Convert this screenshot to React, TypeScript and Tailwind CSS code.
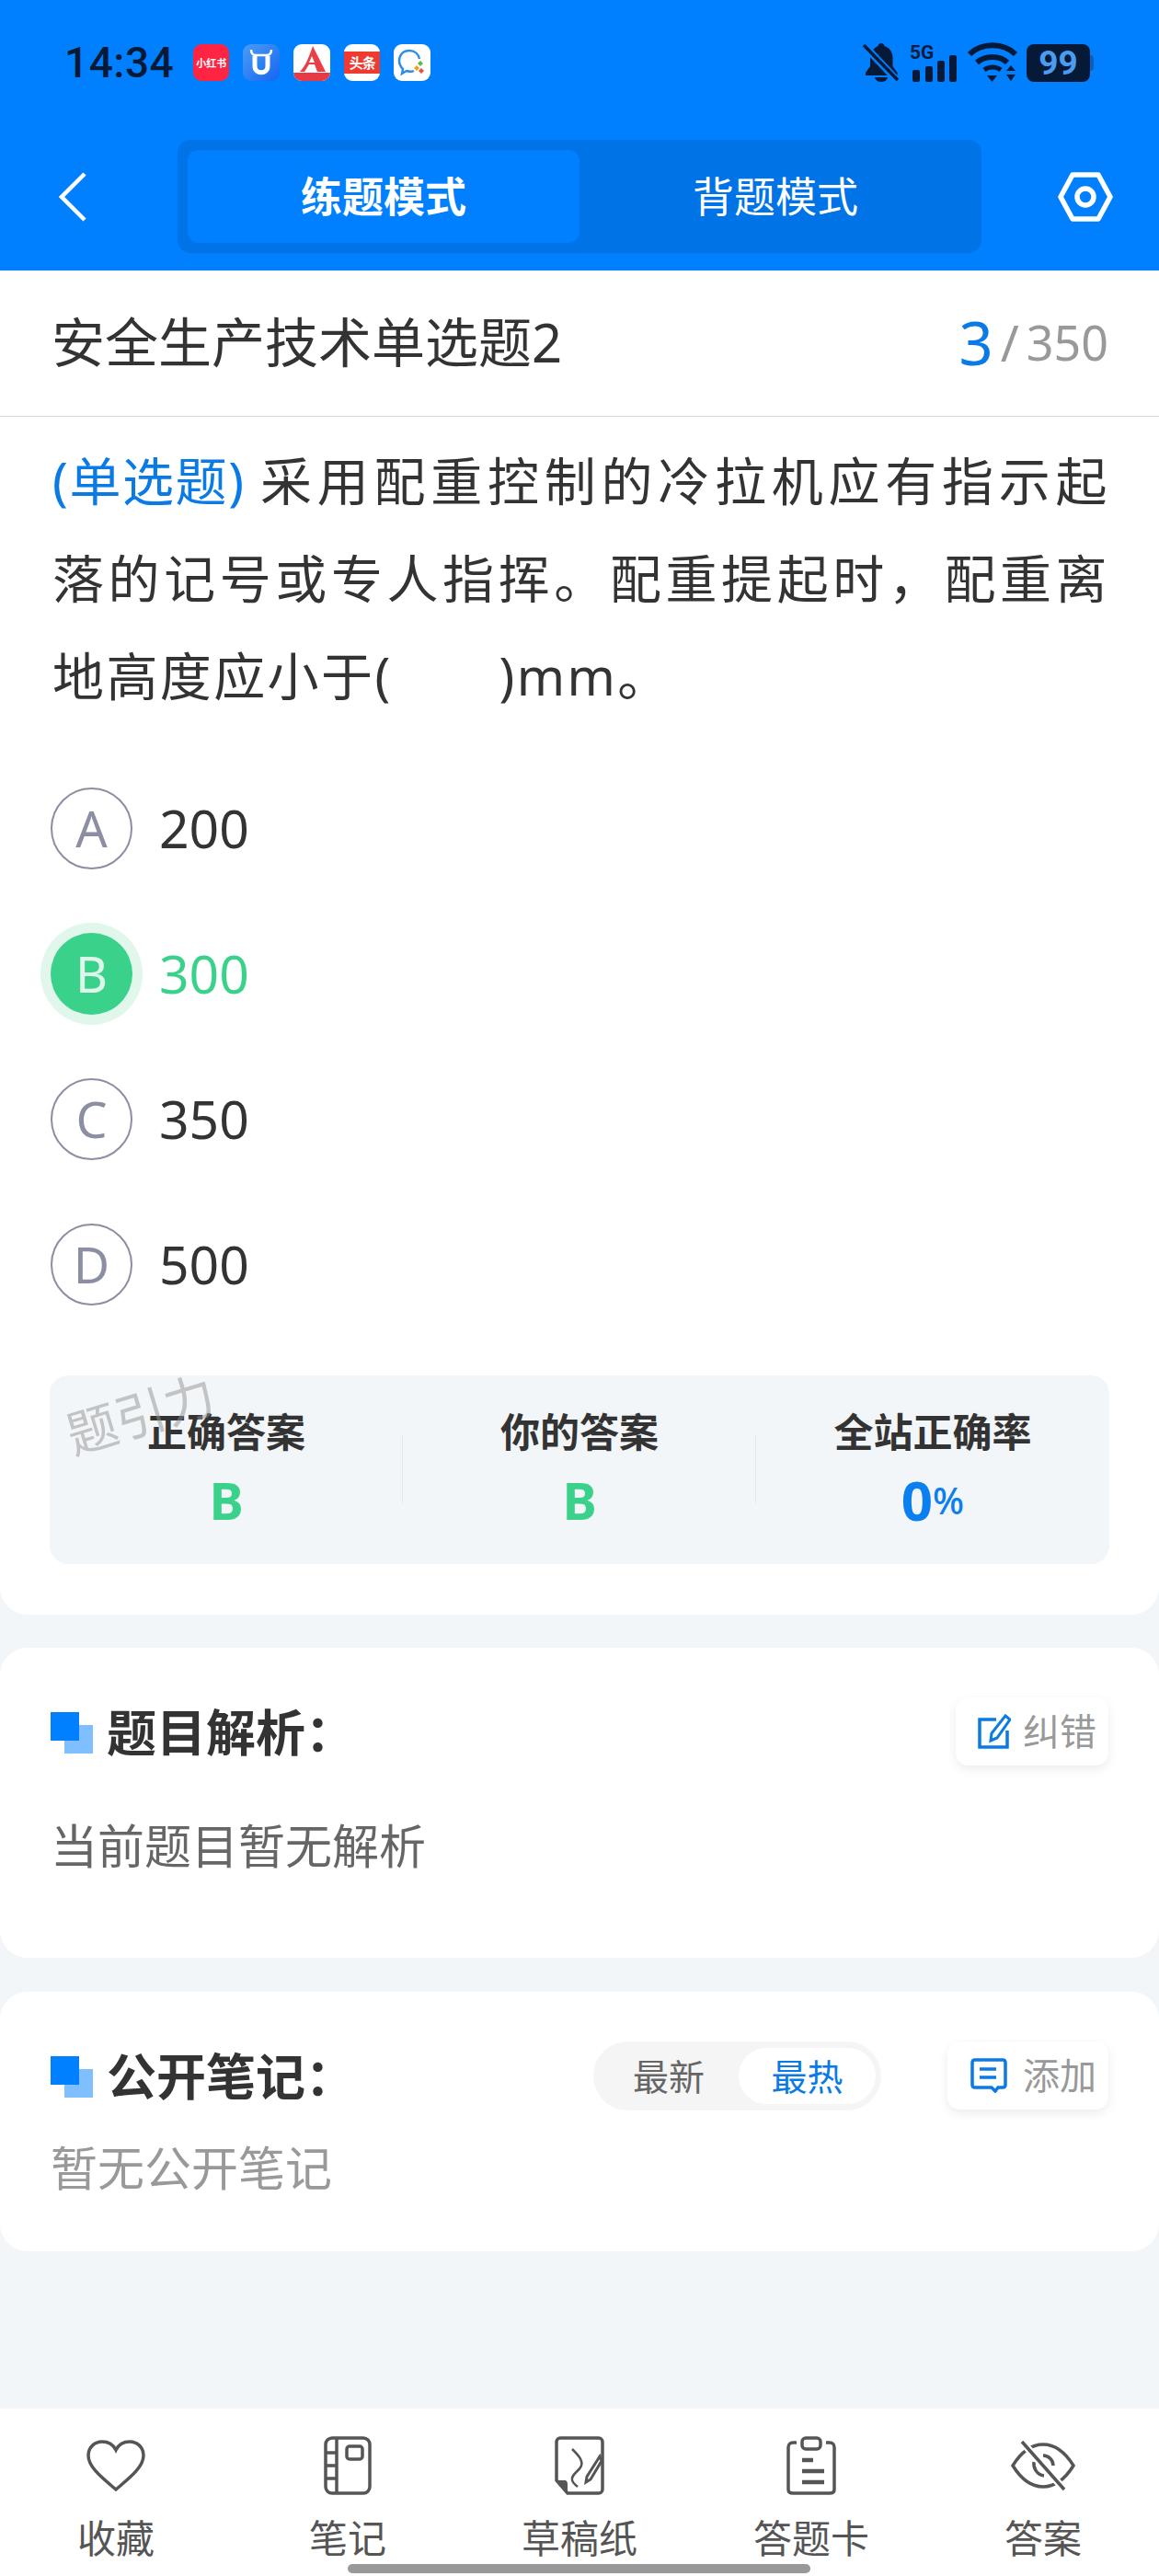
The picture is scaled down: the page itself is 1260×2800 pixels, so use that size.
import React from 'react';

const cjk = "font-['Noto_Sans','Noto_Sans_CJK_SC',sans-serif]";

function SectionMark() {
  return (
    <div className="relative w-[46px] h-[45px] shrink-0">
      <div className="absolute left-[15px] top-[14px] w-[31px] h-[31px] bg-[#80bfff]" />
      <div className="absolute left-0 top-0 w-[31px] h-[31px] bg-[#0080ff]" />
    </div>
  );
}

function StatusIcons() {
  return (
    <div className="flex items-center">
      <svg width="42" height="44" viewBox="0 0 42 44" className="mr-[10px]">
        <path d="M21 1c2 0 3 1 3.500 3 6 2 9 7 9 13v9l5 7v3H4v-3l5-7v-9C9 13 11 7 17.500 4 18 2 19 1 21 1z" fill="#061a38" />
        <path d="M14 38h14c-1 4-4 5-7 5s-6-1-7-5z" fill="#061a38" />
        <path d="M2 3l36 38" stroke="#0080ff" strokeWidth="8" />
        <path d="M2 3l37 38" stroke="#061a38" strokeWidth="3.500" />
      </svg>
      <svg width="52" height="44" viewBox="0 0 52 44" className="mr-[11px]">
        <text x="0" y="18" fontSize="21" fontWeight="700" fill="#061a38" fontFamily="Roboto, sans-serif">5G</text>
        <rect x="3" y="30" width="8" height="13" rx="2" fill="#061a38" />
        <rect x="17" y="26" width="8" height="17" rx="2" fill="#061a38" />
        <rect x="30" y="20" width="8" height="23" rx="2" fill="#061a38" />
        <rect x="43" y="14" width="8" height="29" rx="2" fill="#061a38" />
      </svg>
      <svg width="54" height="44" viewBox="0 0 54 44" className="mr-[10px]">
        <path d="M2 13C15 0 39 0 52 13" fill="none" stroke="#061a38" strokeWidth="6" />
        <path d="M10 22c9-8 25-8 33 0" fill="none" stroke="#061a38" strokeWidth="6" />
        <path d="M18 30c5-4 13-4 18 0" fill="none" stroke="#061a38" strokeWidth="5" />
        <path d="M21 36h11l-5.500 7zM42 31l5-6 5 6zM42 35h10l-5 7z" fill="#061a38" />
      </svg>
      <div className="relative w-[69px] h-[41px] rounded-[8px] bg-[#061a38] flex items-center justify-center mr-[3px]">
        <span className="font-['Roboto',sans-serif] text-[37px] font-bold leading-none text-[#4a9cf0]">99</span>
        <div className="absolute right-[-4px] top-[12px] w-[4px] h-[17px] rounded-r bg-[#0a5fc0]" />
      </div>
    </div>
  );
}

function AppIcons() {
  return (
    <div className="flex items-center gap-[15px] ml-[21px]">
      <div className="w-[39px] h-[40px] rounded-[9px] bg-[#ff2442] flex items-center justify-center">
        <span className={`${cjk} text-[11px] font-bold leading-none text-white whitespace-nowrap`}>小红书</span>
      </div>
      <div className="w-[40px] h-[40px] rounded-[9px] bg-gradient-to-br from-[#4b9bf5] to-[#1565f0] flex items-center justify-center">
        <svg width="28" height="30" viewBox="0 0 28 30">
          <path d="M3 1c0 4 2 6 5 6h12c3 0 5-2 5-6" fill="none" stroke="#fff" strokeWidth="2.500" />
          <path d="M7 8v11c0 9 14 9 14 0V8" fill="none" stroke="#fff" strokeWidth="5" />
        </svg>
      </div>
      <div className="relative w-[40px] h-[40px] rounded-[9px] bg-white overflow-hidden flex justify-center">
        <svg width="30" height="30" viewBox="0 0 30 30" className="mt-[2px]">
          <path d="M16 0L30 28H21L18 20H12L7 28H2C8 22 12 12 16 0z" fill="#ea3f47" />
          <path d="M15 11l3 7h-6z" fill="#fff" />
        </svg>
        <div className="absolute bottom-0 left-0 w-full h-[9px] bg-[#e83a44]" />
      </div>
      <div className="w-[39px] h-[40px] rounded-[9px] bg-white flex items-center overflow-hidden">
        <div className="w-full h-[24px] bg-[#ee3a2f] flex items-center justify-center">
          <span className={`${cjk} text-[15px] font-bold leading-none text-white whitespace-nowrap tracking-[-1px]`}>头条</span>
        </div>
      </div>
      <div className="w-[40px] h-[40px] rounded-[9px] bg-white flex items-center justify-center">
        <svg width="32" height="30" viewBox="0 0 32 30">
          <path d="M13 2C6 2 2 7 2 13c0 4 2 7 4 9l-1 5 5-3c3 1 6 1 8 0" fill="none" stroke="#2e8fe6" strokeWidth="2.500" />
          <path d="M13 2c6 0 10 4 11 9" fill="none" stroke="#2e8fe6" strokeWidth="2.500" />
          <path d="M25 13l3 3-3 3-3-3z" fill="#5fb84a" />
          <path d="M21 18l3 3-3 3-3-3z" fill="#f0a020" />
          <path d="M26 21l3 3-3 3-3-3z" fill="#e8503a" />
        </svg>
      </div>
    </div>
  );
}

function Option({ letter, value, picked }: { letter: string; value: string; picked?: boolean }) {
  return (
    <div className="h-[158px] flex items-center">
      {picked ? (
        <div className="w-[89px] h-[89px] rounded-full bg-[#3ad28a] ring-[11px] ring-[#e1f7ec] flex items-center justify-center text-[#dff7ea] text-[54px] leading-none">
          {letter}
        </div>
      ) : (
        <div className="w-[89px] h-[89px] rounded-full border-[2.500px] border-[#8c8ea3] flex items-center justify-center text-[#8c8ea3] text-[54px] leading-none">
          {letter}
        </div>
      )}
      <span className={`ml-[29px] text-[57px] leading-none ${picked ? 'text-[#3ad28a]' : 'text-[#333]'}`}>{value}</span>
    </div>
  );
}

function Stat({ label, children, divided }: { label: string; children: React.ReactNode; divided?: boolean }) {
  return (
    <div className="relative flex-1 flex flex-col items-center pt-[40px]">
      {divided && <div className="absolute right-0 top-[65px] w-px h-[74px] bg-[#e4e8ee]" />}
      <div className="text-[43px] leading-[44px] font-bold text-[#333]">{label}</div>
      <div className="mt-[25px] h-[52px] flex items-center justify-center">{children}</div>
    </div>
  );
}

function NavItem({ label, children }: { label: string; children: React.ReactNode }) {
  return (
    <div className="flex flex-col items-center">
      <div className="h-[68px] flex items-center justify-center">{children}</div>
      <div className="mt-[20px] text-[42px] leading-[50px] text-[#555]">{label}</div>
    </div>
  );
}

const navStroke = { fill: 'none', stroke: '#555', strokeWidth: 3.5 };

export default function App() {
  return (
    <div className={`${cjk} relative w-[1260px] h-[2800px] bg-[#f2f6f9] flex flex-col overflow-hidden`}>
      <header className="h-[294px] bg-[#0080ff] shrink-0">
        <div className="h-[136px] pl-[70px] pr-[72px] flex items-center justify-between">
          <div className="flex items-center">
            <span className="font-['Roboto',sans-serif] text-[46px] font-medium leading-none text-[#061a38] tracking-[0.5px]">14:34</span>
            <AppIcons />
          </div>
          <StatusIcons />
        </div>
        <div className="mt-[16px] pl-[64px] pr-[50px] flex items-center">
          <svg width="30" height="54" viewBox="0 0 30 54">
            <path d="M28 2L3 27l25 25" fill="none" stroke="#fff" strokeWidth="4.500" />
          </svg>
          <div className="ml-[99px] w-[874px] h-[123px] rounded-[14px] bg-[#0073e6] p-[11px] pr-0 flex">
            <div className="w-[426px] h-[101px] rounded-[12px] bg-[#0080ff] flex items-center justify-center text-[45px] font-bold text-white">练题模式</div>
            <div className="flex-1 flex items-center justify-center text-[45px] text-white pr-[11px]">背题模式</div>
          </div>
          <svg width="60" height="54" viewBox="0 0 60 54" className="ml-auto">
            <path d="M16 3h28l13 24-13 24H16L3 27z" fill="none" stroke="#fff" strokeWidth="5.500" strokeLinejoin="round" />
            <circle cx="30" cy="27" r="9" fill="none" stroke="#fff" strokeWidth="5.500" />
          </svg>
        </div>
      </header>

      <section className="h-[1461px] shrink-0 bg-white rounded-b-[30px]">
        <div className="h-[159px] border-b-[1.500px] border-[#d8d8d8] pl-[56px] pr-[55px] pb-[2px] flex items-center justify-between">
          <div className="text-[58px] text-[#333] leading-none">安全生产技术单选题2</div>
          <div className="flex items-center">
            <span className="text-[65px] leading-none text-[#0a7ae6] ml-[3px]">3</span>
            <span className="text-[54px] leading-none text-[#999] ml-[8px]">/</span>
            <span className="text-[52px] leading-none text-[#999] ml-[8px]">350</span>
          </div>
        </div>
        <div className="pl-[57px] pr-[54px] pt-[16px] text-[56px] leading-[106px] tracking-[2.400px] text-[#333]">
          <div className="whitespace-nowrap text-justify [text-align-last:justify]">
            <span className="inline-block mr-[13px] text-[#0a7ae6] tracking-[1.600px]">(单选题)</span>采用配重控制的冷拉机应有指示起
          </div>
          <div className="whitespace-nowrap text-justify [text-align-last:justify]">落的记号或专人指挥。配重提起时，配重离</div>
          <div className="whitespace-nowrap">
            地高度应小于(<span className="inline-block w-[116px]" />)mm。
          </div>
        </div>
        <div className="pl-[55px] mt-[34px]">
          <Option letter="A" value="200" />
          <Option letter="B" value="300" picked />
          <Option letter="C" value="350" />
          <Option letter="D" value="500" />
        </div>
        <div className="relative mx-[54px] mt-[42px] h-[205px] rounded-[20px] bg-[#f2f6f9] flex">
          <Stat label="正确答案" divided><span className="text-[56px] font-bold leading-none text-[#3ad28a]">B</span></Stat>
          <Stat label="你的答案" divided><span className="text-[56px] font-bold leading-none text-[#3ad28a]">B</span></Stat>
          <Stat label="全站正确率">
            <span className="text-[60px] font-bold leading-none text-[#0a7ff0]">0</span>
            <span className="text-[40px] font-medium leading-none text-[#0a7ff0] self-end mb-[5px]">%</span>
          </Stat>
          <div className="absolute left-[16px] top-[14px] text-[55px] leading-none text-[#8f8f8f]/50 -rotate-[17deg]">题引力</div>
        </div>
      </section>

      <section className="mt-[36px] h-[337px] shrink-0 bg-white rounded-[30px] pl-[55px] pr-[55px] pt-[54px]">
        <div className="flex items-start justify-between">
          <div className="flex items-center mt-[8px]">
            <SectionMark />
            <div className="ml-[15px] text-[54px] leading-[60px] font-bold text-[#333]">题目解析：</div>
          </div>
          <div className="w-[166px] h-[74px] rounded-[14px] bg-white shadow-[0_4px_12px_rgba(0,0,0,0.08)] flex items-center pl-[24px]">
            <svg width="36" height="38" viewBox="0 0 36 38">
              <path d="M20 6H2v30h30V18" fill="none" stroke="#0a7ae6" strokeWidth="3.500" />
              <path d="M30 2l5 4-14 20-7 3 1-8z" fill="none" stroke="#0a7ae6" strokeWidth="3" />
            </svg>
            <span className="ml-[13px] text-[40px] leading-none text-[#999]">纠错</span>
          </div>
        </div>
        <div className="mt-[57px] text-[51px] leading-[60px] text-[#666]">当前题目暂无解析</div>
      </section>

      <section className="mt-[37px] h-[282px] shrink-0 bg-white rounded-[30px] pl-[55px] pr-[55px] pt-[54px]">
        <div className="flex items-start">
          <div className="flex items-center mt-[8px]">
            <SectionMark />
            <div className="ml-[15px] text-[54px] leading-[60px] font-bold text-[#333]">公开笔记：</div>
          </div>
          <div className="ml-auto w-[313px] h-[75px] rounded-full bg-[#f5f5f5] flex items-center pr-[6px]">
            <div className="flex-1 text-center text-[39px] leading-none text-[#666] pl-[6px]">最新</div>
            <div className="w-[149px] h-[61px] rounded-full bg-white flex items-center justify-center text-[39px] leading-none text-[#0a7ae6]">最热</div>
          </div>
          <div className="ml-[72px] w-[175px] h-[74px] rounded-[14px] bg-white shadow-[0_4px_12px_rgba(0,0,0,0.08)] flex items-center pl-[25px]">
            <svg width="40" height="38" viewBox="0 0 40 38">
              <path d="M5 2h30c2 0 3 1 3 3v24c0 2-1 3-3 3h-5l-3 4-4-4H5c-2 0-3-1-3-3V5c0-2 1-3 3-3z" fill="none" stroke="#0a7ae6" strokeWidth="3.500" />
              <path d="M10 12h18M10 21h18" stroke="#0a7ae6" strokeWidth="3.500" />
            </svg>
            <span className="ml-[17px] text-[40px] leading-none text-[#999]">添加</span>
          </div>
        </div>
        <div className="mt-[32px] text-[51px] leading-[60px] text-[#999]">暂无公开笔记</div>
      </section>

      <div className="flex-1" />

      <nav className="h-[182px] shrink-0 bg-white pt-[28px] px-0 grid grid-cols-5">
        <NavItem label="收藏">
          <svg width="64" height="56" viewBox="0 0 64 56">
            <path d="M32 54C18 42 2 30 2 17 2 8 9 2 17 2c6 0 12 3 15 9 3-6 9-9 15-9 8 0 15 6 15 15 0 13-16 25-30 37z" {...navStroke} />
          </svg>
        </NavItem>
        <NavItem label="笔记">
          <svg width="52" height="64" viewBox="0 0 52 64">
            <rect x="2" y="2" width="48" height="60" rx="7" {...navStroke} />
            <path d="M14 2v60M2 18h12M2 32h12M2 46h12" {...navStroke} />
            <rect x="25" y="11" width="17" height="14" rx="3" {...navStroke} />
          </svg>
        </NavItem>
        <NavItem label="草稿纸">
          <svg width="56" height="64" viewBox="0 0 56 64">
            <path d="M7 2h42c2 0 4 2 4 4v52c0 2-2 4-4 4H15L3 48V6c0-2 2-4 4-4z" {...navStroke} />
            <path d="M3 48h9c2 0 3 2 3 4v10z" fill="#555" />
            <path d="M20 14c6 6 12 12 10 18-2 6-12 10-10 16 1 4 4 5 6 7" {...navStroke} strokeWidth={2.5} />
            <path d="M50 22L36 44l-1 6 5-3 12-20z" fill="#fff" stroke="#555" strokeWidth="3" />
          </svg>
        </NavItem>
        <NavItem label="答题卡">
          <svg width="56" height="64" viewBox="0 0 56 64">
            <path d="M12 7H8C5 7 3 9 3 12v46c0 3 2 4 5 4h40c3 0 5-1 5-4V12c0-3-2-5-5-5h-4" {...navStroke} />
            <rect x="18" y="2" width="20" height="12" rx="4" {...navStroke} />
            <path d="M18 26h12M18 38h24M18 50h24" fill="none" stroke="#555" strokeWidth="4.500" />
          </svg>
        </NavItem>
        <NavItem label="答案">
          <svg width="70" height="56" viewBox="0 0 70 56">
            <path d="M2 28C12 12 24 5 35 5s23 7 33 23C58 44 46 51 35 51S12 44 2 28z" {...navStroke} />
            <path d="M35 17c6 0 11 5 11 11" {...navStroke} />
            <path d="M25 24c-1 6 3 14 11 15" {...navStroke} />
            <path d="M12 2l46 52" fill="none" stroke="#fff" strokeWidth="8" />
            <path d="M12 2l46 52" {...navStroke} />
          </svg>
        </NavItem>
      </nav>

      <div className="absolute left-[378px] top-[2787px] w-[503px] h-[10px] rounded-full bg-[#999]" />
    </div>
  );
}
